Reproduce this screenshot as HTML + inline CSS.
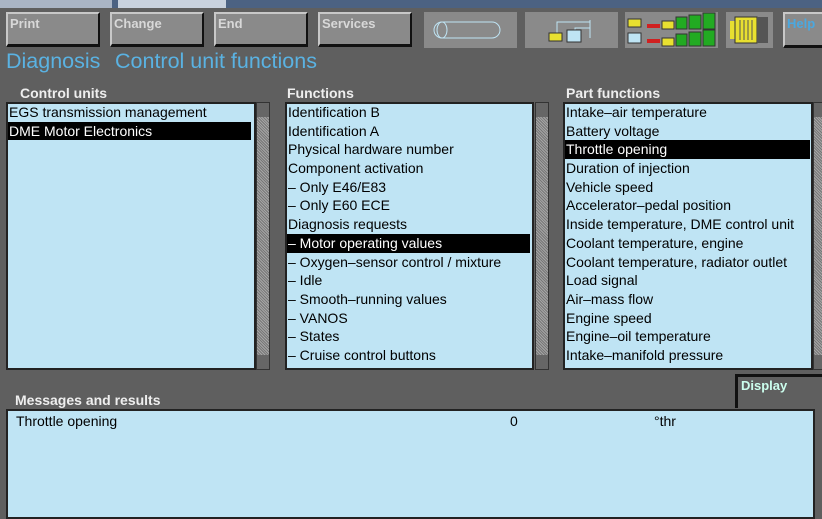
<!DOCTYPE html><html><head><style>
body{margin:0;width:822px;height:514px;background:#5f5f5f;font-family:"Liberation Sans",Arial,sans-serif;position:relative;overflow:hidden}
.a{position:absolute}
.tabbar{left:0;top:0;width:822px;height:8px;background:#4c6282}
.tab{top:0;height:8px;background:#c9d2de}
.btn{background:#8a8a8a;border-top:2px solid #c8c8c8;border-left:2px solid #c8c8c8;border-right:2px solid #111;border-bottom:3px solid #111;color:#d8d8d8;font-size:13px;font-weight:bold;padding:2px 0 0 2px;box-sizing:border-box}
.ib{background:#8a8a8a}
.h{color:#eee;font-weight:bold;font-size:14px}
.list{background:#bfe4f4;border:2px solid #222;box-sizing:border-box;font-size:14px;line-height:18.7px;color:#000}
.list div{padding-left:1px;height:18.7px;white-space:nowrap;overflow:hidden}
.sel{background:#000;color:#fff}
.sb{background:repeating-linear-gradient(45deg,#777 0 1px,#a5a5a5 1px 2px);border:1px solid #333;box-sizing:border-box}
.sb:before,.sb:after{content:"";position:absolute;left:0;width:12px;height:14px;background:#666}
.sb:before{top:0}.sb:after{bottom:0}
.t{font-size:21.5px;color:#5ab2e2;top:49px;white-space:nowrap}
</style></head><body>
<div class="a tabbar"></div>
<div class="a tab" style="left:0;width:112px;background:#aab5c5"></div>
<div class="a tab" style="left:118px;width:108px"></div>
<div class="a btn" style="left:6px;top:12px;width:94px;height:35px">Print</div>
<div class="a btn" style="left:110px;top:12px;width:94px;height:35px">Change</div>
<div class="a btn" style="left:214px;top:12px;width:94px;height:35px">End</div>
<div class="a btn" style="left:318px;top:12px;width:94px;height:35px">Services</div>
<div class="a ib" style="left:424px;top:12px;width:93px;height:36px"><svg width="93" height="36"><rect x="10" y="10" width="66" height="16" rx="8" fill="none" stroke="#bfe4f4"/><ellipse cx="18" cy="18" rx="5" ry="8" fill="none" stroke="#bfe4f4"/></svg></div>
<div class="a ib" style="left:525px;top:12px;width:93px;height:36px"><svg width="93" height="36"><path d="M32 24V10H65M50 24V16H65M65 8V26" fill="none" stroke="#bfe4f4"/><rect x="24" y="21" width="13" height="8" fill="#e8e030" stroke="#333"/><rect x="42" y="18" width="14" height="12" fill="#bfe4f4" stroke="#333"/></svg></div>
<div class="a ib" style="left:625px;top:12px;width:93px;height:36px"><svg width="93" height="36"><rect x="3" y="7" width="13" height="8" fill="#e8e030" stroke="#333"/><rect x="3" y="21" width="13" height="10" fill="#bfe4f4" stroke="#333"/><rect x="22" y="12" width="13" height="4" fill="#d02020"/><rect x="22" y="27" width="13" height="4" fill="#d02020"/><rect x="37" y="9" width="12" height="8" fill="#e8e030" stroke="#333"/><rect x="37" y="26" width="12" height="8" fill="#e8e030" stroke="#333"/><rect x="51" y="5" width="11" height="12" fill="#2a2" stroke="#333"/><rect x="64" y="3" width="12" height="14" fill="#2a2" stroke="#333"/><rect x="78" y="1" width="12" height="16" fill="#2a2" stroke="#333"/><rect x="51" y="22" width="11" height="12" fill="#2a2" stroke="#333"/><rect x="64" y="20" width="12" height="14" fill="#2a2" stroke="#333"/><rect x="78" y="18" width="12" height="16" fill="#2a2" stroke="#333"/></svg></div>
<div class="a ib" style="left:726px;top:12px;width:47px;height:36px"><svg width="47" height="36"><rect x="4" y="9" width="6" height="18" fill="#e8e030"/><rect x="9" y="5" width="22" height="26" fill="#e8e030" stroke="#333"/><rect x="31" y="5" width="11" height="26" fill="#555"/><path d="M14 8v20M18 8v20M22 8v20M26 8v20" stroke="#555"/></svg></div>
<div class="a btn" style="left:783px;top:12px;width:45px;height:36px;color:#4aa8e0">Help</div>
<div class="a t" style="left:6px">Diagnosis</div>
<div class="a t" style="left:115px">Control unit functions</div>
<div class="a h" style="left:20px;top:85px">Control units</div>
<div class="a h" style="left:287px;top:85px">Functions</div>
<div class="a h" style="left:566px;top:85px">Part functions</div>
<div class="a list" style="left:6px;top:102px;width:250px;height:268px;padding-top:0"><div style="margin-top:-1px">EGS transmission management</div><div class="sel" style="width:242px">DME Motor Electronics</div></div>
<div class="a sb" style="left:256px;top:102px;width:14px;height:268px"></div>
<div class="a list" style="left:285px;top:102px;width:249px;height:268px"><div style="margin-top:-1px">Identification B</div><div>Identification A</div><div>Physical hardware number</div><div>Component activation</div><div>– Only E46/E83</div><div>– Only E60 ECE</div><div>Diagnosis requests</div><div class="sel" style="width:242px">– Motor operating values</div><div>– Oxygen–sensor control / mixture</div><div>– Idle</div><div>– Smooth–running values</div><div>– VANOS</div><div>– States</div><div>– Cruise control buttons</div></div>
<div class="a sb" style="left:535px;top:102px;width:14px;height:268px"></div>
<div class="a list" style="left:563px;top:102px;width:250px;height:268px"><div style="margin-top:-1px">Intake–air temperature</div><div>Battery voltage</div><div class="sel" style="width:244px">Throttle opening</div><div>Duration of injection</div><div>Vehicle speed</div><div>Accelerator–pedal position</div><div>Inside temperature, DME control unit</div><div>Coolant temperature, engine</div><div>Coolant temperature, radiator outlet</div><div>Load signal</div><div>Air–mass flow</div><div>Engine speed</div><div>Engine–oil temperature</div><div>Intake–manifold pressure</div></div>
<div class="a sb" style="left:813px;top:102px;width:14px;height:268px"></div>
<div class="a h" style="left:15px;top:392px">Messages and results</div>
<div class="a" style="left:735px;top:374px;width:90px;height:34px;background:#5f5f5f;border-left:3px solid #111;border-top:3px solid #111;box-sizing:border-box;color:#cfe;font-size:13px;font-weight:bold;padding:1px 3px">Display</div>
<div class="a list" style="left:6px;top:409px;width:809px;height:110px;font-size:14px"><span class="a" style="left:8px;top:1px">Throttle opening</span><span class="a" style="left:502px;top:1px">0</span><span class="a" style="left:646px;top:1px">°thr</span></div>
</body></html>
